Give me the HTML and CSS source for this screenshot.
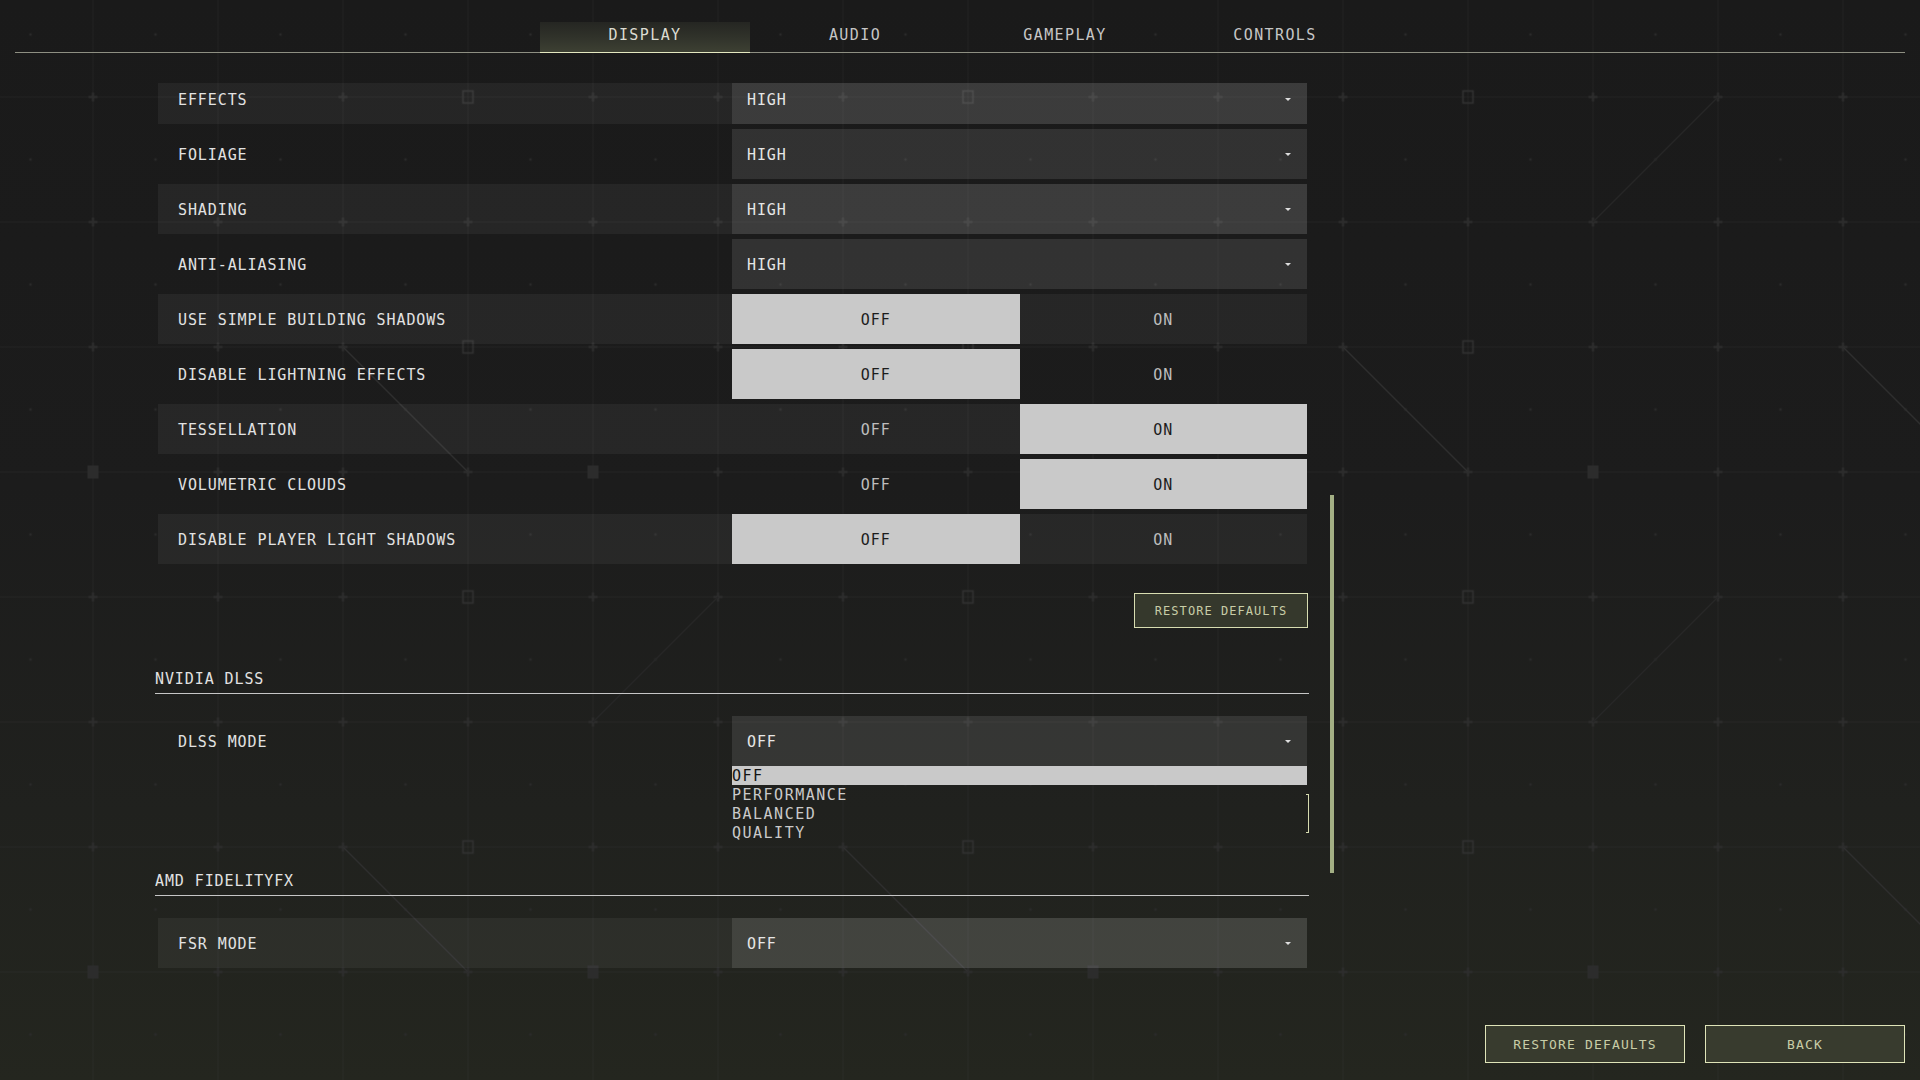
FILE: index.html
```html
<!DOCTYPE html>
<html lang="en">
<head>
<meta charset="utf-8">
<title>Settings - Display</title>
<link rel="stylesheet" href="styles.css">
</head>
<body>
<div class="bg">
  <svg width="1920" height="1080" viewBox="0 0 1920 1080" xmlns="http://www.w3.org/2000/svg">
    <defs>
      <path id="p" d="M-4.5 0h9M0 -4.5v9" stroke="#2d2d2d" stroke-width="2"/>
      <rect id="hs" x="-5" y="-6" width="10" height="12" fill="none" stroke="#313131" stroke-width="1.5"/>
      <rect id="fs" x="-5.5" y="-6.5" width="11" height="13" fill="#2c2c2c"/>
      <pattern id="grid" patternUnits="userSpaceOnUse" x="30.5" y="34.5" width="125" height="125">
        <path d="M62.5 0V125M0 62.5H125" stroke="#ffffff" stroke-opacity="0.03" stroke-width="1"/>
        <circle cx="0" cy="0" r="1.3" fill="#2a2a2a"/>
        <circle cx="125" cy="0" r="1.3" fill="#2a2a2a"/>
        <circle cx="0" cy="125" r="1.3" fill="#2a2a2a"/>
        <circle cx="125" cy="125" r="1.3" fill="#2a2a2a"/>
      </pattern>
      <pattern id="marks" patternUnits="userSpaceOnUse" x="30.5" y="34.5" width="500" height="500">
        <use href="#p" x="62.5" y="62.5"/>
        <use href="#p" x="187.5" y="62.5"/>
        <use href="#p" x="312.5" y="62.5"/>
        <use href="#hs" x="437.5" y="62.5"/>
        <use href="#p" x="62.5" y="187.5"/>
        <use href="#p" x="187.5" y="187.5"/>
        <use href="#p" x="312.5" y="187.5"/>
        <use href="#p" x="437.5" y="187.5"/>
        <use href="#p" x="62.5" y="312.5"/>
        <use href="#p" x="187.5" y="312.5"/>
        <use href="#p" x="312.5" y="312.5"/>
        <use href="#hs" x="437.5" y="312.5"/>
        <use href="#fs" x="62.5" y="437.5"/>
        <use href="#p" x="187.5" y="437.5"/>
        <use href="#p" x="312.5" y="437.5"/>
        <use href="#p" x="437.5" y="437.5"/>
      </pattern>
    </defs>
    <rect width="1920" height="1080" fill="url(#grid)"/>
    <rect width="1920" height="1080" fill="url(#marks)"/>
    <g stroke="#2e2e2e" stroke-width="1.5" fill="none">
      <path d="M343 347L468 472"/>
      <path d="M1343 347L1468 472"/>
      <path d="M1843 347L1968 472"/>
      <path d="M1718 97L1593 222" stroke="#262626"/>
      <path d="M1718 597L1593 722" stroke="#272727"/>
      <path d="M593 722L718 597" stroke="#262626"/>
      <path d="M343 847L468 972"/>
      <path d="M843 847L968 972"/>
      <path d="M1843 847L1968 972"/>
    </g>
  </svg>
</div>

<div class="app">
  <header class="tabs">
    <div class="tab active">DISPLAY</div>
    <div class="tab">AUDIO</div>
    <div class="tab">GAMEPLAY</div>
    <div class="tab">CONTROLS</div>
  </header>

  <main class="scroll-area">
    <div class="scroll-content">
      <div class="scroll-inner">
        <div class="rows">
          <div class="row alt">
            <div class="label">EFFECTS</div>
            <div class="select"><span>HIGH</span><span class="arrow"></span></div>
          </div>
          <div class="row">
            <div class="label">FOLIAGE</div>
            <div class="select"><span>HIGH</span><span class="arrow"></span></div>
          </div>
          <div class="row alt">
            <div class="label">SHADING</div>
            <div class="select"><span>HIGH</span><span class="arrow"></span></div>
          </div>
          <div class="row">
            <div class="label">ANTI-ALIASING</div>
            <div class="select"><span>HIGH</span><span class="arrow"></span></div>
          </div>
          <div class="row alt">
            <div class="label">USE SIMPLE BUILDING SHADOWS</div>
            <div class="opt on">OFF</div>
            <div class="opt">ON</div>
          </div>
          <div class="row">
            <div class="label">DISABLE LIGHTNING EFFECTS</div>
            <div class="opt on">OFF</div>
            <div class="opt">ON</div>
          </div>
          <div class="row alt">
            <div class="label">TESSELLATION</div>
            <div class="opt">OFF</div>
            <div class="opt on">ON</div>
          </div>
          <div class="row">
            <div class="label">VOLUMETRIC CLOUDS</div>
            <div class="opt">OFF</div>
            <div class="opt on">ON</div>
          </div>
          <div class="row alt">
            <div class="label">DISABLE PLAYER LIGHT SHADOWS</div>
            <div class="opt on">OFF</div>
            <div class="opt">ON</div>
          </div>
        </div>

        <div class="restore-row">
          <button class="btn btn-small">RESTORE DEFAULTS</button>
        </div>

        <section class="group">
          <h2 class="section-head first">NVIDIA DLSS</h2>
          <div class="field">
            <div class="row">
              <div class="label">DLSS MODE</div>
              <div class="select"><span>OFF</span><span class="arrow"></span></div>
            </div>
            <ul class="listbox">
              <li class="item selected">OFF</li>
              <li class="item">PERFORMANCE</li>
              <li class="item">BALANCED</li>
              <li class="item">QUALITY</li>
            </ul>
          </div>
        </section>

        <section class="group">
          <h2 class="section-head second">AMD FIDELITYFX</h2>
          <div class="field">
            <div class="row alt">
              <div class="label">FSR MODE</div>
              <div class="select"><span>OFF</span><span class="arrow"></span></div>
            </div>
          </div>
        </section>
      </div>
    </div>
    <div class="scrollbar"><div class="thumb"></div></div>
  </main>

  <footer class="footer">
    <button class="btn btn-large">RESTORE DEFAULTS</button>
    <button class="btn btn-large">BACK</button>
  </footer>
</div>
</body>
</html>
```

FILE: styles.css
```css
* {
  box-sizing: border-box;
}

html, body {
  margin: 0;
  padding: 0;
}

body {
  width: 1920px;
  height: 1080px;
  overflow: hidden;
  position: relative;
  background: linear-gradient(180deg, #1a1a1a 0%, #1c1c1c 45%, #20211e 75%, #24261f 100%);
  font-family: "DejaVu Sans Mono", "Liberation Mono", monospace;
  color: #e0e0e0;
}

.bg {
  position: absolute;
  left: 0;
  top: 0;
  width: 1920px;
  height: 1080px;
  z-index: 0;
}

.bg svg {
  display: block;
}

.app {
  position: relative;
  z-index: 1;
  height: 1080px;
  display: flex;
  flex-direction: column;
}

/* Tabs */
.tabs {
  margin: 22px 15px 0;
  border-bottom: 1px solid #8e8f82;
  display: flex;
  justify-content: center;
}

.tab {
  width: 210px;
  height: 31px;
  margin-bottom: -1px;
  padding-bottom: 4px;
  border-bottom: 1px solid transparent;
  display: flex;
  align-items: center;
  justify-content: center;
  font-size: 15px;
  letter-spacing: 1.4px;
  color: #c6c6c6;
}

.tab.active {
  color: #dcdcd2;
  background: linear-gradient(180deg, #252622 0%, #30322a 50%, #3d4033 100%);
  border-bottom-color: #e4e8c0;
}

/* Scroll area */
.scroll-area {
  margin: 30px 0 0 155px;
  height: 902px;
  display: flex;
}

.scroll-content {
  width: 1154px;
  height: 902px;
  overflow: hidden;
}

.scroll-inner {
  margin-top: -9px;
}

.scrollbar {
  width: 4px;
  margin-left: 21px;
}

.thumb {
  margin-top: 412px;
  height: 378px;
  background: #a3af84;
}

/* Rows */
.rows {
  display: flex;
  flex-direction: column;
  gap: 5px;
  margin: 0 2px 0 3px;
}

.row {
  display: grid;
  grid-template-columns: 574px 1fr 1fr;
  height: 50px;
}

.row.alt {
  background: rgba(255, 255, 255, 0.052);
}

.label {
  display: flex;
  align-items: center;
  padding: 2px 0 0 20px;
  font-size: 15px;
  letter-spacing: 0.9px;
  color: #e2e2e2;
}

.select {
  grid-column: 2 / 4;
  display: flex;
  align-items: center;
  justify-content: space-between;
  padding: 2px 16px 0 15px;
  background: rgba(255, 255, 255, 0.1);
  font-size: 15px;
  letter-spacing: 0.9px;
  color: #e6e6e6;
}

.arrow {
  width: 0;
  height: 0;
  margin-top: -2px;
  border-left: 3px solid transparent;
  border-right: 3px solid transparent;
  border-top: 3px solid #dedede;
}

.opt {
  display: flex;
  align-items: center;
  justify-content: center;
  padding-top: 2px;
  font-size: 15px;
  letter-spacing: 0.9px;
  color: #bdbdbd;
}

.opt.on {
  background: #c9c9c9;
  color: #1c1c1c;
}

/* Restore defaults (section) */
.restore-row {
  display: flex;
  justify-content: flex-end;
  margin-top: 29px;
  padding-right: 1px;
}

.btn {
  font-family: inherit;
  border: 1px solid #d8ddb1;
  background: #35382c;
  color: #c8cda7;
  display: flex;
  align-items: center;
  justify-content: center;
  padding: 0;
  cursor: pointer;
}

.btn-small {
  width: 174px;
  height: 35px;
  font-size: 12px;
  letter-spacing: 1.05px;
}

/* Section headings */
.section-head {
  margin: 0;
  font-weight: normal;
  font-size: 15px;
  letter-spacing: 0.9px;
  line-height: 22px;
  padding: 2px 0 3px;
  border-bottom: 1px solid #c6c6c6;
  color: #e2e2e2;
}

.section-head.first {
  margin-top: 38px;
}

.section-head.second {
  margin-top: 26px;
}

.field {
  margin: 22px 2px 0 3px;
}

.listbox {
  position: relative;
  list-style: none;
  margin: 0 0 0 574px;
  padding: 0;
}

.listbox::after {
  content: "";
  position: absolute;
  right: -2px;
  top: 28px;
  width: 2px;
  height: 37px;
  border: 1px solid #d6dbb0;
  border-left: none;
}

.item {
  height: 19px;
  padding-top: 1px;
  line-height: 18px;
  font-size: 15px;
  letter-spacing: 1.5px;
  color: #cacaca;
}

.item.selected {
  background: #c9c9c9;
  color: #141414;
}

/* Footer */
.footer {
  margin-top: auto;
  display: flex;
  justify-content: flex-end;
  gap: 20px;
  padding: 0 15px 17px 0;
}

.btn-large {
  width: 200px;
  height: 38px;
  padding-top: 1px;
  font-size: 13px;
  letter-spacing: 1.15px;
  background: #383b2e;
  border-color: #dfe4b8;
}
```
